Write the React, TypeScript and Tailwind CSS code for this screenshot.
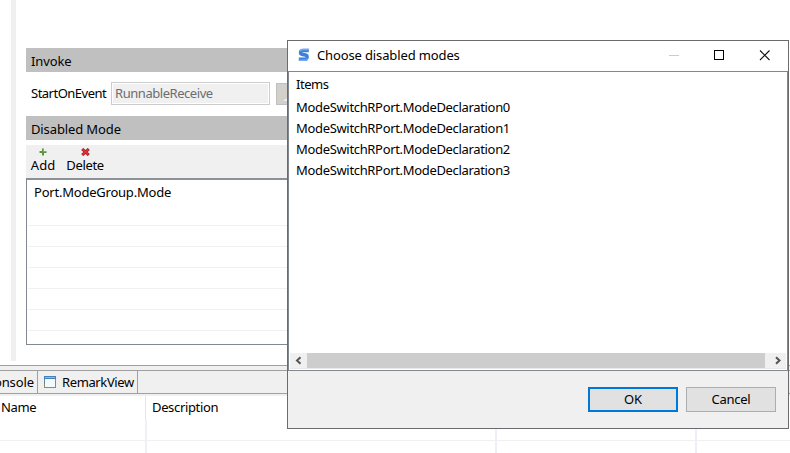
import type { ReactNode } from "react";

const items = [
  "ModeSwitchRPort.ModeDeclaration0",
  "ModeSwitchRPort.ModeDeclaration1",
  "ModeSwitchRPort.ModeDeclaration2",
  "ModeSwitchRPort.ModeDeclaration3",
];

function SectionTitle({ children }: { children: ReactNode }) {
  return <div className="h-6 shrink-0 bg-[#c0c0c0] pl-[5px] pt-[2px] leading-[22px] tracking-[-0.12px]">{children}</div>;
}

function AddIcon() {
  return (
    <svg width="8" height="8" viewBox="0 0 8 8" className="block">
      <path d="M3 0.5h2V3h2.5v2H5v2.5H3V5H0.5V3H3z" fill="#5c963c" />
      <path d="M3.5 1h1v2.5H7" fill="none" stroke="#8fbd70" strokeWidth="0.7" />
    </svg>
  );
}

function DeleteIcon() {
  return (
    <svg width="9" height="8" viewBox="0 0 9 8" className="block">
      <path d="M1.2 1L7.8 7M7.8 1L1.2 7" stroke="#a51d22" strokeWidth="3" />
      <path d="M1.5 1.3L7.5 6.7M7.5 1.3L1.5 6.7" stroke="#e3343c" strokeWidth="1.3" />
    </svg>
  );
}

function ViewIcon() {
  return (
    <svg width="12" height="12" viewBox="0 0 12 12" className="block">
      <rect x="0.5" y="0.5" width="11" height="11" fill="#f2fafc" stroke="#8d8a6b" />
      <path d="M0 0h12v3H0z" fill="#4580bb" />
      <path d="M1 1h10v1H1z" fill="#8bbbe4" />
      <path d="M0.5 3v5" stroke="#5d85a5" />
    </svg>
  );
}

function AppIcon() {
  return (
    <svg width="12" height="14" viewBox="0 0 12 14" className="block">
      <path d="M10.8 2.5H5C3.1 2.5 2.6 3.3 2.6 4.5c0 1.3.7 1.8 2 2l2.8.6c1.4.3 1.7 1 1.6 2.1-.2 1.5-.9 2.1-2.2 2.1H0.8" fill="none" stroke="#3c80dc" strokeWidth="3.6" />
      <path d="M10.8 1.5H5.2c-1.6 0-2.5.6-2.9 1.8M0.9 12.2h6c1.5 0 2.2-.5 2.7-1.6" fill="none" stroke="#74acef" strokeWidth="1.4" />
    </svg>
  );
}

function Editor() {
  return (
    <div className="flex h-[365px] shrink-0 pr-1">
      <div className="ml-[11px] h-[361px] w-[5px] shrink-0 bg-[#f0f0f0]" />
      <div className="ml-[10px] flex flex-1 flex-col pt-12">
        <SectionTitle>Invoke</SectionTitle>
        <div className="flex h-11 shrink-0 pt-[10px]">
          <span className="ml-[5px] w-20 leading-[22px] tracking-[-0.5px]">StartOnEvent</span>
          <div className="h-[23px] w-[159px] border border-[#ccc] bg-white p-px">
            <div className="h-full bg-[#f0f0f0] pl-[2px] leading-[19px] tracking-[-0.45px] text-[#6d6d6d]">RunnableReceive</div>
          </div>
          <div className="ml-[6px] mt-px h-[22px] w-20 border border-[#bfbfbf] bg-[#d0d0d0] pl-px pt-1">
            <svg width="14" height="14" viewBox="0 0 14 14">
              <circle cx="5" cy="7" r="4.5" fill="none" stroke="#e6d39b" strokeDasharray="2 1" />
              <path d="M5 13l4-3 5 3z" fill="#eee" />
            </svg>
          </div>
        </div>
        <SectionTitle>Disabled Mode</SectionTitle>
        <div className="mt-[5px] flex h-[33px] shrink-0 gap-3 bg-[#f0f0f0] pl-[5px] pt-[3px]">
          <div className="flex w-6 flex-col items-center">
            <AddIcon />
            <span className="leading-[19px]">Add</span>
          </div>
          <div className="flex w-[36px] flex-col items-center">
            <DeleteIcon />
            <span className="leading-[19px] tracking-[-0.35px]">Delete</span>
          </div>
        </div>
        <div className="flex h-[167px] shrink-0 flex-col border border-t-2 border-[#828790] border-t-[#8c9097] pl-px">
          <div className="h-[46px] shrink-0 border-b border-[#f0f0f0] pl-[6px] pt-px leading-[22px] tracking-[-0.22px]">Port.ModeGroup.Mode</div>
          {[0, 1, 2, 3, 4].map((row) => (
            <div key={row} className="h-[21px] shrink-0 border-b border-[#f0f0f0]" />
          ))}
        </div>
      </div>
    </div>
  );
}

function BottomViews() {
  return (
    <div className="flex flex-1 flex-col border-t border-[#a0a0a0] bg-[#f0f0f0] pt-1">
      <div className="flex h-6 shrink-0 border-y border-[#a0a0a0]">
        <div className="flex w-[38px] shrink-0 justify-end border-r border-[#a0a0a0] pr-[3px] pt-px leading-[21px] tracking-[-0.1px]">Console</div>
        <div className="flex w-[100px] shrink-0 border-r border-[#a0a0a0] pl-[6px] pt-px leading-[21px] tracking-[-0.38px]">
          <span className="mr-[6px] pt-1"><ViewIcon /></span>
          RemarkView
        </div>
      </div>
      <div className="mt-[2px] flex h-[45px] shrink-0 border-b border-[#f0f0f0] bg-white leading-[23px] tracking-[-0.35px]">
        <div className="flex w-[147px] shrink-0 flex-col">
          <div className="mr-px h-6 border-r border-[#e5e5e5] pl-[1px]">Name</div>
          <div className="flex-1 border-r-2 border-[#edf0f6]" />
        </div>
        <div className="w-[350px] border-r-2 border-[#edf0f6] pl-[5px]">Description</div>
        <div className="w-[200px] border-r-2 border-[#edf0f6]" />
      </div>
      <div className="flex flex-1 bg-white">
        <div className="w-[147px] border-r-2 border-[#edf0f6]" />
        <div className="w-[350px] border-r-2 border-[#edf0f6]" />
        <div className="w-[200px] border-r-2 border-[#edf0f6]" />
      </div>
    </div>
  );
}

function ModesDialog() {
  return (
    <div className="absolute left-[287px] top-[40px] flex h-[389px] w-[502px] flex-col border border-[#6b6b6f] bg-[#f0f0f0]">
      <div className="flex h-[30px] shrink-0 items-center bg-white pl-[10px]">
        <span className="mb-[2px]"><AppIcon /></span>
        <span className="ml-[7px] flex-1 tracking-[-0.13px]">Choose disabled modes</span>
        <svg width="120" height="30" viewBox="0 0 120 30" shapeRendering="crispEdges">
          <path d="M1 14.5h10" stroke="#ccc" />
          <rect x="46.5" y="9.5" width="9" height="9" fill="none" stroke="#000" />
          <path d="M92 9.5l9.5 9.5M101.5 9.5L92 19" stroke="#111" strokeWidth="1.1" shapeRendering="auto" />
        </svg>
      </div>
      <div className="flex h-[300px] shrink-0 flex-col border border-[#828790] bg-white">
        <div className="flex-1 pl-[7px]">
          <div className="h-6 pt-px leading-[22px] tracking-[-0.45px]">Items</div>
          <div className="pt-px">
            {items.map((item) => (
              <div key={item} className="h-[21px] whitespace-nowrap leading-[21px] tracking-[-0.33px]">{item}</div>
            ))}
          </div>
        </div>
        <div className="mx-px mb-px flex h-4 border-b border-[#e8e8e8] bg-[#f0f0f0]">
          <svg width="17" height="15" viewBox="0 0 17 15">
            <path d="M10.5 4.3L7 7.5l3.5 3.2" fill="none" stroke="#555" strokeWidth="2" />
          </svg>
          <div className="w-[458px] bg-[#cdcdcd]" />
          <svg width="21" height="15" viewBox="0 0 21 15">
            <path d="M11 4.3l3.5 3.2L11 10.7" fill="none" stroke="#555" strokeWidth="2" />
          </svg>
        </div>
      </div>
      <div className="flex justify-end gap-2 pr-3 pt-4">
        <button className="h-[25px] w-[90px] border-2 border-[#0078d7] bg-[#e1e1e1] leading-[21px]">OK</button>
        <button className="h-[25px] w-[90px] border border-[#adadad] bg-[#e1e1e1] leading-[23px] tracking-[-0.25px]">Cancel</button>
      </div>
    </div>
  );
}

export default function App() {
  return (
    <div className="relative flex h-[453px] w-[790px] flex-col overflow-hidden bg-white font-['Noto_Sans','Open_Sans',sans-serif] text-[13px] text-black">
      <Editor />
      <BottomViews />
      <ModesDialog />
    </div>
  );
}
